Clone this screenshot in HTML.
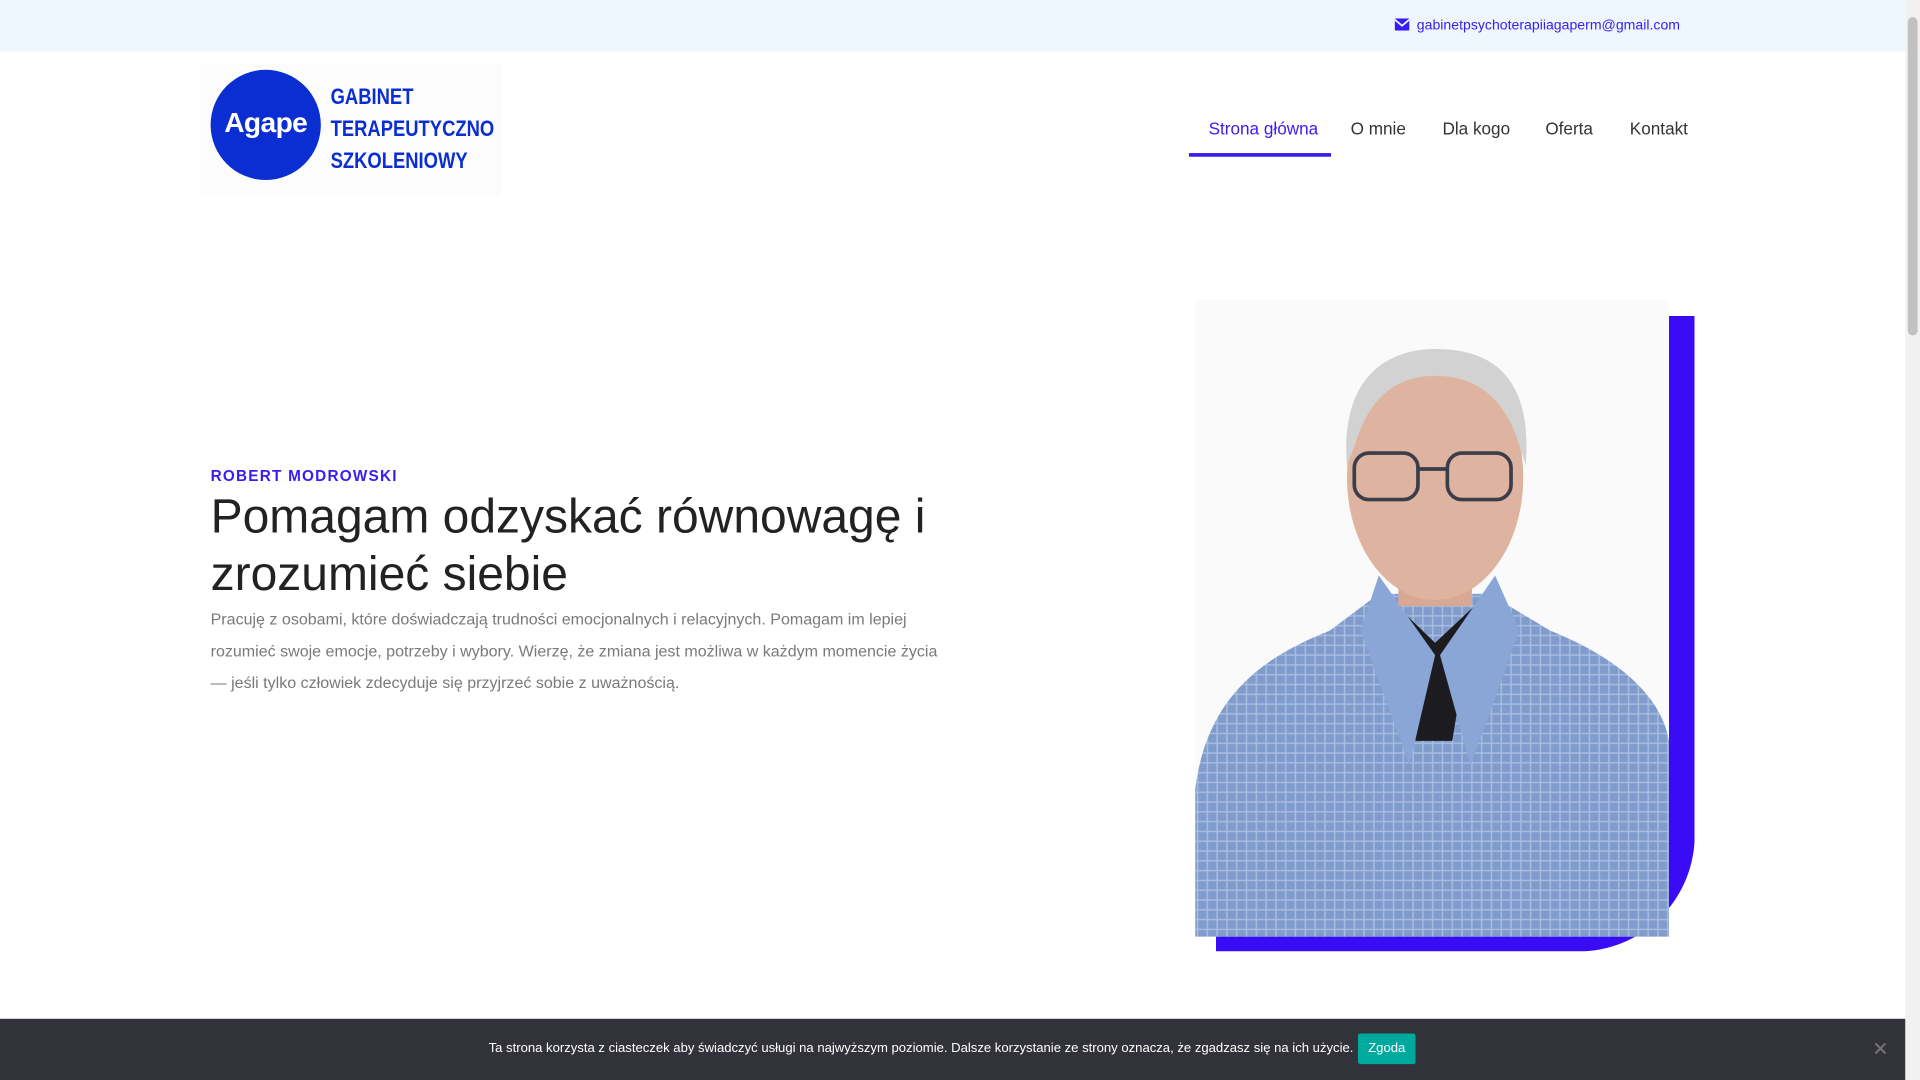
<!DOCTYPE html>
<html><head><meta charset="utf-8">
<style>
html,body{margin:0;padding:0;width:1920px;height:1080px;overflow:hidden;background:#fff}
#s{position:absolute;left:0;top:0;width:1568px;height:882px;transform:scale(1.2245);transform-origin:0 0;font-family:"Liberation Sans","Noto Sans CJK JP",sans-serif}
.top{position:absolute;left:0;top:0;width:1556px;height:42px;background:#eef6fe}
.mail{position:absolute;right:184px;top:15px;font-size:11.5px;color:#3a1cf2}
.nav a{position:absolute;top:97px;font-size:14px;color:#333;text-decoration:none}
.sb{position:absolute;left:1556px;top:0;width:12px;height:882px;background:#f1f1f1}
.sb div{position:absolute;left:2px;top:14px;width:8px;height:260px;background:#c1c1c1;border-radius:4px}
h1{position:absolute;left:172px;top:399px;margin:0;font-weight:400;font-size:39.2px;line-height:47px;color:#222;width:640px}
.p{position:absolute;left:172px;top:493px;width:600px;font-size:13.1px;line-height:26px;color:#7a7a7a}
.cb{position:absolute;left:0;top:832px;width:1556px;height:50px;background:#32323a;color:#fff;font-size:10.7px}
</style></head><body><div id="s">
<div class="top"><div class="mail"><svg width="12" height="10" viewBox="0 0 12 10" style="vertical-align:-1px;margin-right:6px"><rect x="0" y="0" width="12" height="10" rx="1" fill="#3a1cf2"/><path d="M0 1 L6 6 L12 1" stroke="#eef6fe" stroke-width="1.4" fill="none"/></svg>gabinetpsychoterapiiagaperm@gmail.com</div></div>
<div style="position:absolute;left:164px;top:52px;width:245px;height:108px;background:#fcfcfd"></div>
<div style="position:absolute;left:172px;top:57px;width:90px;height:90px;border-radius:50%;background:#0a2ed1;color:#fff;font-size:23px;font-weight:700;text-align:center;line-height:86px;letter-spacing:-0.5px">Agape</div>
<div style="position:absolute;left:270px;top:66px;color:#0a2ed1;font-size:18px;line-height:26px;font-weight:700;transform:scaleX(.835);transform-origin:0 0;white-space:nowrap">GABINET<br>TERAPEUTYCZNO<br>SZKOLENIOWY</div>
<div class="nav"><a style="left:987px;color:#3a1cf2">Strona główna</a><a style="left:1103px">O mnie</a><a style="left:1178px">Dla kogo</a><a style="left:1262px">Oferta</a><a style="left:1331px">Kontakt</a></div>
<div style="position:absolute;left:971px;top:125px;width:116px;height:3px;background:#3a1cf2"></div>
<div style="position:absolute;left:172px;top:382px;font-size:12.5px;font-weight:700;letter-spacing:1px;color:#3a1cf2">ROBERT MODROWSKI</div>
<h1>Pomagam odzyskać równowagę i zrozumieć siebie</h1>
<div class="p">Pracuję z osobami, które doświadczają trudności emocjonalnych i relacyjnych. Pomagam im lepiej rozumieć swoje emocje, potrzeby i wybory. Wierzę, że zmiana jest możliwa w każdym momencie życia — jeśli tylko człowiek zdecyduje się przyjrzeć sobie z uważnością.</div>
<div style="position:absolute;left:993px;top:258px;width:370px;height:498px;border-right:21px solid #3a0cf5;border-bottom:21px solid #3a0cf5;border-bottom-right-radius:95px"></div>
<svg style="position:absolute;left:976px;top:245px" width="387" height="520" viewBox="0 0 387 520">
<defs><pattern id="pl" width="8" height="8" patternUnits="userSpaceOnUse"><rect width="8" height="8" fill="#7f9ccc"/><path d="M0 2H8M2 0V8" stroke="#a9bde0" stroke-width="1.2"/></pattern></defs>
<rect width="387" height="520" fill="#fafafb"/>
<path d="M0 400 C10 320 60 290 110 270 L150 240 L240 240 L290 270 C340 290 380 320 387 360 L387 520 L0 520Z" fill="url(#pl)"/>
<path d="M165 250 L196 280 L228 250 L210 360 L180 360Z" fill="#1c1c20"/>
<path d="M150 225 L196 290 L175 380 L135 270Z M245 225 L200 290 L225 380 L265 270Z" fill="#8aa6d6"/>
<rect x="166" y="190" width="60" height="60" fill="#d8a893"/>
<ellipse cx="196" cy="145" rx="72" ry="100" fill="#deb3a0"/>
<path d="M124 135 C118 60 160 40 196 40 C240 40 276 60 270 135 L262 110 C250 80 230 62 196 62 C160 62 140 85 130 120Z" fill="#d2d2d2"/>
<g fill="none" stroke="#3a3d4a" stroke-width="3"><rect x="130" y="125" width="52" height="38" rx="12"/><rect x="206" y="125" width="52" height="38" rx="12"/><path d="M182 138H206"/></g>
</svg>
<div class="cb"><span style="position:absolute;left:399px;top:18px">Ta strona korzysta z ciasteczek aby świadczyć usługi na najwyższym poziomie. Dalsze korzystanie ze strony oznacza, że zgadzasz się na ich użycie.</span><span style="position:absolute;left:1109px;top:12px;width:47px;height:25px;background:#00a99d;border-radius:2px;text-align:center;line-height:25px">Zgoda</span><span style="position:absolute;left:1529px;top:15px;color:#777;font-size:16px">✕</span></div>
<div class="sb"><div></div></div>
</div></body></html>
